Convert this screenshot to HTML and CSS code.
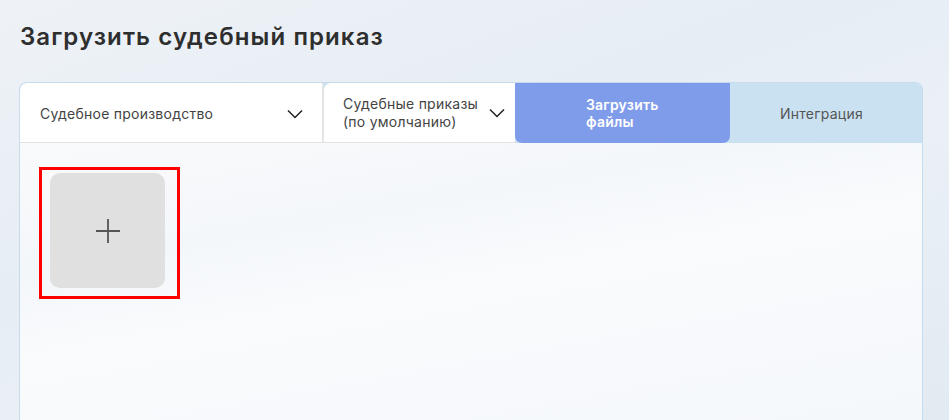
FILE: index.html
```html
<!DOCTYPE html>
<html lang="ru">
  <head>
    <meta charset="UTF-8" />
    <meta name="viewport" content="width=device-width, initial-scale=1.0" />
    <title>Загрузить судебный приказ</title>
    <link rel="stylesheet" href="styles.css">
  </head>

  <body>
    <div class="page">
      <h1 class="title">Загрузить судебный приказ</h1>

      <div class="card">
        <div class="tabs">
          <div class="tab select first">
            <span class="label">Судебное производство</span>
            <svg class="chevron" width="16" height="10" viewBox="0 0 16 10">
              <path d="M1 1.5 L8 8.5 L15 1.5" fill="none" stroke="#222" stroke-width="1.5" />
            </svg>
          </div>
          <div class="tab select second">
            <span class="label">Судебные приказы<br />(по умолчанию)</span>
            <svg class="chevron" width="16" height="10" viewBox="0 0 16 10">
              <path d="M1 1.5 L8 8.5 L15 1.5" fill="none" stroke="#222" stroke-width="1.5" />
            </svg>
          </div>
          <div class="tab upload">
            <span class="upload-text">Загрузить<br />файлы</span>
          </div>
          <div class="tab integration">Интеграция</div>
        </div>

        <div class="panel">
          <div class="marked">
            <button class="add-tile">
              <svg width="26" height="26" viewBox="0 0 26 26">
                <path d="M13 1 V25 M1 13 H25" fill="none" stroke="#555" stroke-width="1.8" />
              </svg>
            </button>
          </div>
        </div>
      </div>
    </div>
  </body>
</html>
```

FILE: styles.css
```css
* {
  margin: 0;
  padding: 0;
  box-sizing: border-box;
}

body {
  font-family: Inter, "Noto Sans", sans-serif;
  color: #333;
  overflow: hidden;
  background: linear-gradient(160deg, #eef2f7 0%, #e6edf4 40%, #eaf0f6 60%, #e2eaf2 100%);
}

.page {
  height: 100vh;
  padding: 22px 26px 0 19px;
  display: flex;
  flex-direction: column;
}

.title {
  font-size: 24px;
  font-weight: 600;
  color: #2e2e2e;
  letter-spacing: 1.1px;
  padding-left: 1px;
  line-height: 30px;
  margin-bottom: 30px;
}

.card {
  flex: 1;
  border: 1px solid #c6dcec;
  border-bottom: none;
  border-radius: 8px 8px 0 0;
  display: flex;
  flex-direction: column;
  overflow: hidden;
}

.tabs {
  display: flex;
  height: 60px;
  background: #cae1f1;
}

.tab {
  display: flex;
  align-items: center;
  font-size: 14px;
  letter-spacing: 0.25px;
}

.select {
  background: #fff;
  color: #444;
  border-bottom: 1px solid #e2e2e2;
  justify-content: space-between;
  border-radius: 7px 0 0 0;
}

.first {
  width: 304px;
  padding: 2px 19px 0 20px;
  border-right: 2px solid #e4e4e4;
}

.second {
  width: 191px;
  padding: 1px 10px 0 19px;
  line-height: 18px;
}

.upload {
  width: 215px;
  background: #7f9cea;
  border-radius: 0 0 7px 7px;
  justify-content: center;
}

.upload-text {
  color: #fff;
  font-weight: 600;
  font-size: 14px;
  letter-spacing: 0.2px;
  line-height: 17px;
  width: 73px;
}

.integration {
  flex: 1;
  justify-content: center;
  color: #555;
  padding: 1px 9px 0 0;
}

.chevron {
  flex-shrink: 0;
}

.panel {
  flex: 1;
  background: linear-gradient(170deg, #f9fafc 0%, #f4f7fa 30%, #f9fbfd 50%, #f5f8fb 100%);
  padding: 24px 19px;
}

.marked {
  width: 141px;
  height: 132px;
  border: 3px solid #f00;
  padding: 3px 0 0 8px;
}

.add-tile {
  width: 115px;
  height: 115px;
  border: none;
  border-radius: 10px;
  background: #e0e0e0;
  display: flex;
  align-items: center;
  justify-content: center;
  cursor: pointer;
}
```
